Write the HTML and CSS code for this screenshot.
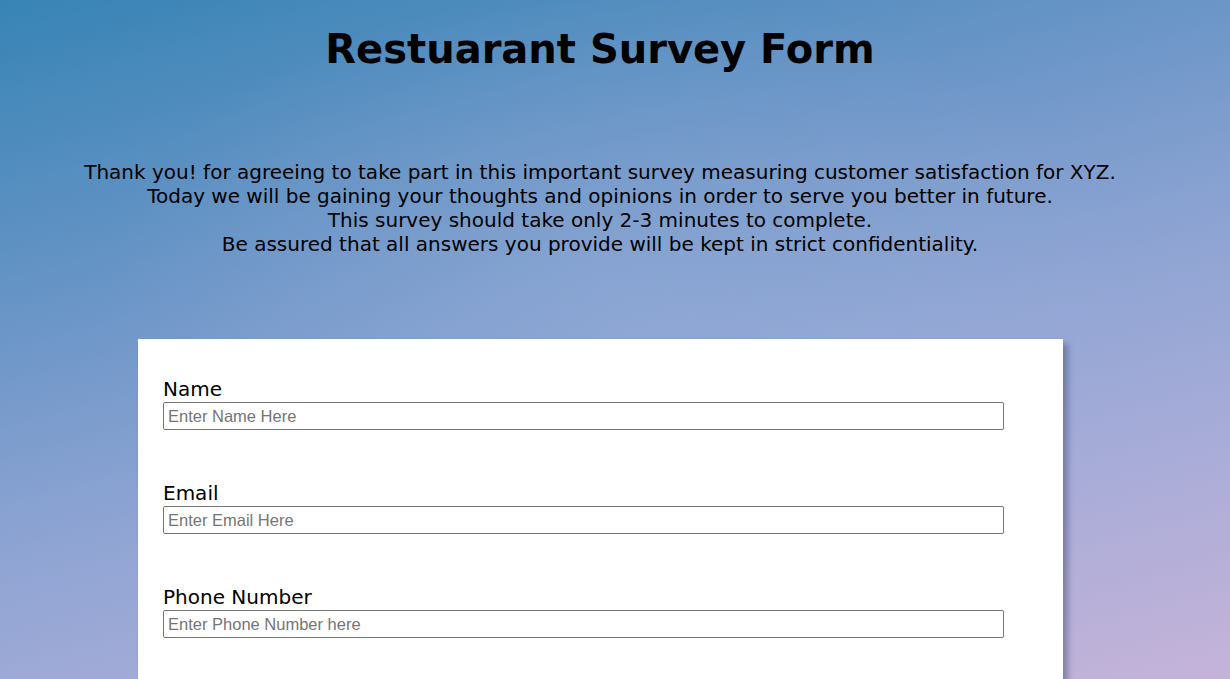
FILE: index.html
```html
<!DOCTYPE html>
<html lang="en">
<head>
<meta charset="utf-8">
<title>Restuarant Survey Form</title>
<link rel="stylesheet" href="styles.css">
</head>
<body>
<header class="header">
  <h1 class="title">Restuarant Survey Form</h1>
  <p class="intro">Thank you! for agreeing to take part in this important survey measuring customer satisfaction for XYZ.<br>Today we will be gaining your thoughts and opinions in order to serve you better in future.<br>This survey should take only 2-3 minutes to complete.<br>Be assured that all answers you provide will be kept in strict confidentiality.</p>
</header>
<form class="card">
  <div class="group">
    <label class="label" for="name">Name</label>
    <input class="field" id="name" type="text" placeholder="Enter Name Here">
  </div>
  <div class="group">
    <label class="label" for="email">Email</label>
    <input class="field" id="email" type="email" placeholder="Enter Email Here">
  </div>
  <div class="group">
    <label class="label" for="phone">Phone Number</label>
    <input class="field" id="phone" type="tel" placeholder="Enter Phone Number here">
  </div>
</form>
</body>
</html>
```

FILE: styles.css
```css
html {
  background: #c5b3d9;
}
body {
  margin: 0;
  min-height: 679px;
  font-family: "DejaVu Sans", Verdana, sans-serif;
  color: #000;
  background:
    radial-gradient(ellipse 520px 300px at 620px 290px, rgba(160, 180, 220, 0.35), rgba(160, 180, 220, 0) 100%),
    linear-gradient(165deg, #3784b5 0%, #6a95c7 32%, #8ea4d3 55%, #a7acd8 75%, #c5b3d9 100%);
  background-repeat: no-repeat;
  background-size: 100% 679px;
  background-color: #c5b3d9;
}
.header {
  width: 1200px;
  display: flex;
  flex-direction: column;
  align-items: center;
  padding-top: 26px;
}
.title {
  margin: 0;
  font-size: 40px;
  font-weight: bold;
  line-height: 46px;
}
.intro {
  margin: 88px 0 0;
  font-size: 20px;
  line-height: 24px;
  text-align: center;
}
.card {
  width: 925px;
  margin: 83px 0 0 138px;
  padding: 38px 59px 100px 25px;
  box-sizing: border-box;
  background: #fff;
  box-shadow: 5px 5px 6px rgba(60, 70, 110, 0.45);
  display: flex;
  flex-direction: column;
  gap: 51px;
}
.group {
  display: flex;
  flex-direction: column;
}
.label {
  font-size: 20px;
  line-height: 25px;
}
.field {
  height: 28px;
  box-sizing: border-box;
  margin: 0;
  padding: 1px 4px;
  border: 1px solid #767676;
  border-radius: 2px;
  font-family: "Liberation Sans", Arial, sans-serif;
  font-size: 16.5px;
}
.field::placeholder {
  color: #757575;
}
```
